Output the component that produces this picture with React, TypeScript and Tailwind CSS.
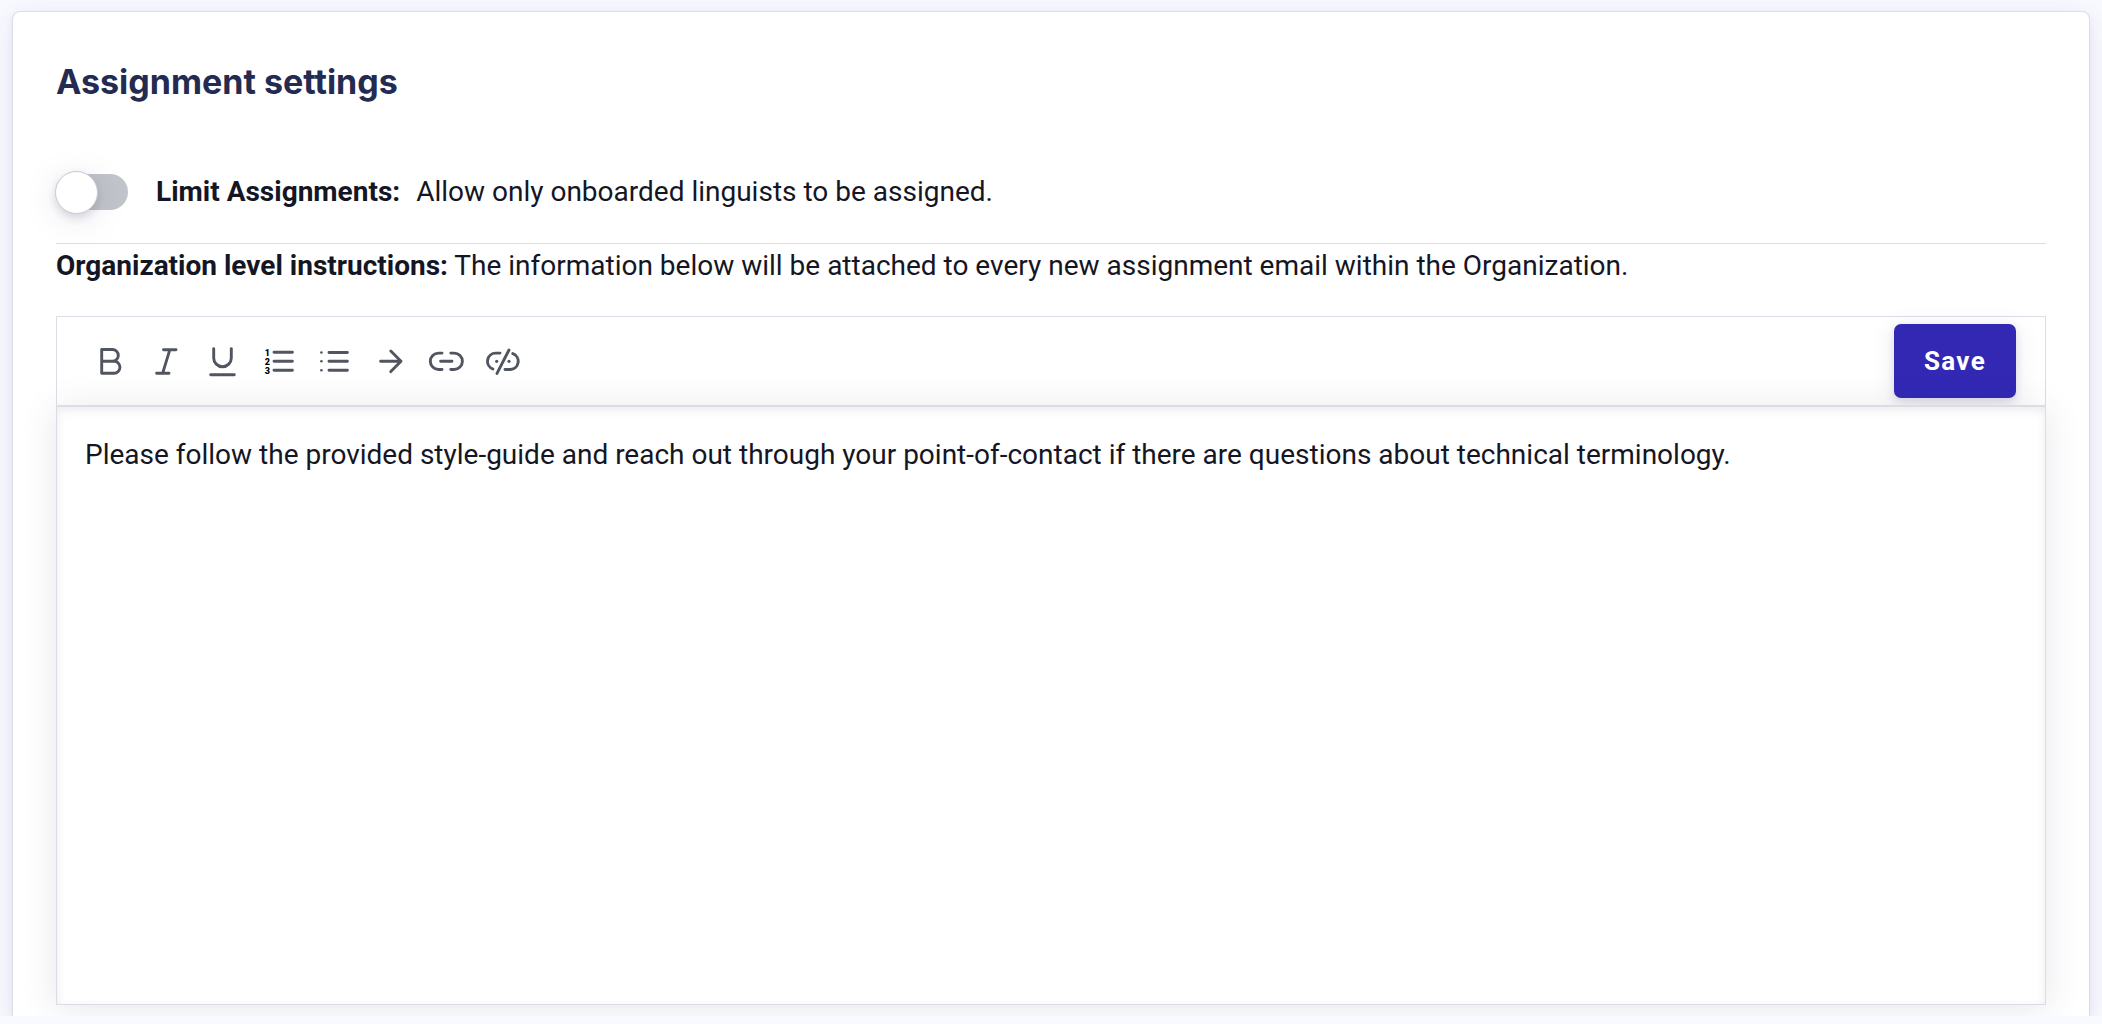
import React from 'react';

interface ToolIcon {
  label: string;
  icon: React.ReactNode;
}

const tools: ToolIcon[] = [
  {
    label: 'Bold',
    icon: <path d="M9.7 6.5V30.2M9.7 6.5H20.4a5.9 5.9 0 0 1 0 11.8H9.7M20.4 18.3h1.6a5.95 5.95 0 0 1 0 11.9H9.7" />
  },
  {
    label: 'Italic',
    icon: <path d="M15.5 6.8H28M8.6 30.3H21M21.8 6.8L14.6 30.3" />
  },
  {
    label: 'Underline',
    icon: <path d="M9.7 5.6v9.3a8.8 8.8 0 0 0 17.6 0V5.6M6.7 31.7H30.3" />
  },
  {
    label: 'Numbered list',
    icon: (
      <>
        <path d="M14 9.3H32.4M14 18.3H32.4M14 27.3H32.4" />
        <g fill="#000000" stroke="none" fontSize="9" fontWeight="900" textAnchor="middle">
          <text x="7.3" y="12.5">1</text>
          <text x="7.3" y="21.5">2</text>
          <text x="7.3" y="30.5">3</text>
        </g>
      </>
    )
  },
  {
    label: 'Bulleted list',
    icon: (
      <>
        <path d="M13 9.5H31.4M13 18.3H31.4M13 27.3H31.4" />
        <g fill="#51555f" stroke="none">
          <circle cx="5.4" cy="9.5" r="1.3" />
          <circle cx="5.4" cy="18.3" r="1.3" />
          <circle cx="5.4" cy="27.3" r="1.3" />
        </g>
      </>
    )
  },
  {
    label: 'Insert arrow',
    icon: <path d="M8.6 18.3H29M18.8 8L29 18.3L18.8 28.6" />
  },
  {
    label: 'Add link',
    icon: <path d="M14 10.1H10.5a8.2 8.2 0 0 0 0 16.4H14M22.8 10.1h3.4a8.2 8.2 0 0 1 0 16.4h-3.4M12.6 18.3H24" />
  },
  {
    label: 'Remove link',
    icon: (
      <>
        <path d="M16 10.1H11.7a8.2 8.2 0 0 0-2.8 15.9M28.8 10.6a8.2 8.2 0 0 1-2.4 15.9H21M25 7L13 30.4" />
        <g fill="#51555f" stroke="none">
          <circle cx="12.7" cy="18.3" r="1.6" />
          <circle cx="25" cy="18.3" r="1.6" />
        </g>
      </>
    )
  }
];

const Toolbar: React.FC = () => {
  return (
    <div className="flex items-center justify-between h-[89px] pl-[25px] pr-[29px] border border-b-0 border-[#dddee5] bg-white">
      <div className="flex">
        {tools.map((tool) => (
          <button key={tool.label} type="button" aria-label={tool.label} className="w-14 h-14 flex items-center justify-center">
            <svg
              width="36"
              height="36"
              viewBox="0 0 36 36"
              fill="none"
              stroke="#51555f"
              strokeWidth="2.9"
              strokeLinecap="round"
              strokeLinejoin="round"
            >
              {tool.icon}
            </svg>
          </button>
        ))}
      </div>
      <button
        type="submit"
        className="w-[122px] h-[74px] rounded-[7px] bg-[#3228b4] text-white text-[26px] font-bold tracking-wider font-['Roboto',sans-serif] shadow-[0_4px_10px_rgba(40,45,90,0.14),0_4px_28px_rgba(40,45,90,0.08)]"
      >
        Save
      </button>
    </div>
  );
};

const App: React.FC = () => {
  return (
    <div className="min-h-screen flex flex-col bg-[#f9faff] pb-2 text-[28px] leading-10 text-[#151624] font-['Roboto',sans-serif]">
      <main className="flex-1 flex flex-col overflow-hidden px-3 pt-[11px]">
        <form
          onSubmit={(e) => e.preventDefault()}
          className="flex-1 flex flex-col bg-white rounded-t-lg border border-b-0 border-[#dcdde8] px-[43px] pb-[11px] shadow-[0_3px_8px_rgba(50,55,130,0.08),0_8px_36px_rgba(50,55,130,0.09)]"
        >
          <h1 className="pt-12 text-[34px] leading-[44px] font-bold text-[#232b50] font-['Inter',sans-serif]">
            Assignment settings
          </h1>

          {/* Limit assignments switch */}
          <div className="flex items-center mt-[66px] pb-[29px] border-b border-[#dddee2]">
            <input
              id="limit"
              type="checkbox"
              role="switch"
              className="appearance-none flex items-center shrink-0 w-[72px] h-9 my-1 mr-7 rounded-full bg-[#c2c4cb] checked:bg-[#3228b4] before:w-[43px] before:h-[43px] before:shrink-0 before:-ml-px before:rounded-full before:bg-white before:border before:border-[#c9cad0] before:shadow-[0_4px_10px_rgba(40,45,90,0.16),0_6px_36px_rgba(40,45,90,0.1)] checked:before:ml-[30px]"
            />
            <label htmlFor="limit">
              <strong className="font-bold mr-4">Limit Assignments:</strong>
              Allow only onboarded linguists to be assigned.
            </label>
          </div>

          <label htmlFor="instructions" className="mt-[2px] mb-[30px]">
            <strong className="font-bold">Organization level instructions:</strong> The information below will be attached to
            every new assignment email within the Organization.
          </label>

          <Toolbar />
          <textarea
            id="instructions"
            defaultValue="Please follow the provided style-guide and reach out through your point-of-contact if there are questions about technical terminology."
            className="flex-1 w-full min-h-[400px] resize-none outline-none px-7 py-7 bg-white border border-t-2 border-[#dbdce4] shadow-[0_4px_34px_rgba(50,55,90,0.12),inset_0_3px_10px_rgba(50,55,90,0.1)]"
          />
        </form>
      </main>
    </div>
  );
};

export default App;
